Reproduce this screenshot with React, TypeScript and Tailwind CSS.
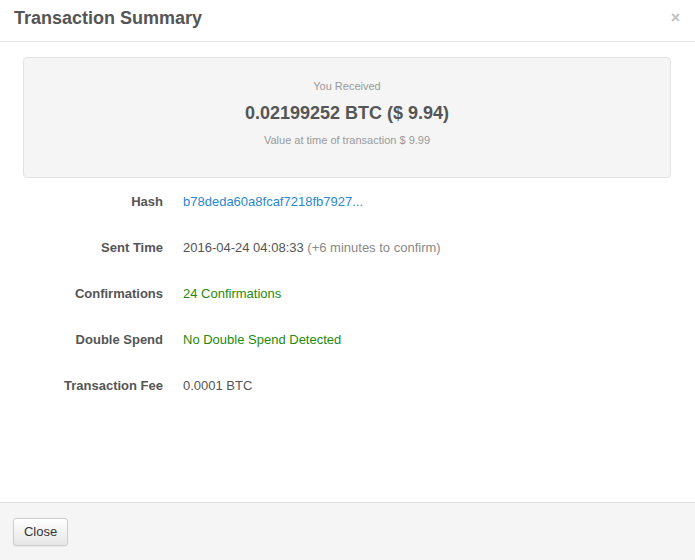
export default function App() {
  const rows: { label: string; value: React.ReactNode }[] = [
    { label: "Hash", value: <span className="text-[#2a87d0]">b78deda60a8fcaf7218fb7927...</span> },
    {
      label: "Sent Time",
      value: (
        <span className="text-[#555]">
          2016-04-24 04:08:33 <span className="text-[#888]">(+6 minutes to confirm)</span>
        </span>
      ),
    },
    { label: "Confirmations", value: <span className="text-[#1f8a0c]">24 Confirmations</span> },
    { label: "Double Spend", value: <span className="text-[#1f8a0c]">No Double Spend Detected</span> },
    { label: "Transaction Fee", value: <span className="text-[#555]">0.0001 BTC</span> },
  ];
  return (
    <div
      className="h-[560px] w-[695px] flex flex-col bg-white text-[#555]"
      style={{ fontFamily: '"Liberation Sans", Arial, sans-serif' }}
    >
      <div className="h-[42px] shrink-0 border-b border-[#e5e5e5] flex items-center justify-between pl-[14px] pr-[15px] pb-[6px]">
        <div className="text-[18px] font-bold text-[#555] leading-none">Transaction Summary</div>
        <div className="text-[16px] font-bold text-[#c0c0c0] leading-none">×</div>
      </div>
      <div className="flex-1 pt-[15px]">
        <div className="ml-[23px] w-[648px] h-[121px] bg-[#f5f5f5] border border-[#e3e3e3] rounded-[4px] flex flex-col items-center pt-[21px]">
          <div className="text-[11px] leading-[14px] text-[#999]">You Received</div>
          <div className="mt-[10px] text-[18px] leading-[20px] font-bold text-[#555]">0.02199252 BTC ($ 9.94)</div>
          <div className="mt-[10px] text-[11px] leading-[14px] text-[#999]">Value at time of transaction $ 9.99</div>
        </div>
        <div className="mt-[1px] flex flex-col">
          {rows.map((r) => (
            <div key={r.label} className="h-[46px] flex items-center text-[13px]">
              <div className="w-[163px] text-right font-bold text-[#555]">{r.label}</div>
              <div className="ml-[20px]">{r.value}</div>
            </div>
          ))}
        </div>
      </div>
      <div className="h-[58px] shrink-0 border-t border-[#ddd] bg-[#f5f5f5] flex items-center pl-[13px] pt-[1px]">
        <button className="h-[28px] w-[55px] rounded-[3px] border border-[#ccc] bg-gradient-to-b from-white to-[#e6e6e6] text-[13px] text-[#333] shadow-[0_1px_1px_rgba(0,0,0,0.05)]">
          Close
        </button>
      </div>
    </div>
  );
}
